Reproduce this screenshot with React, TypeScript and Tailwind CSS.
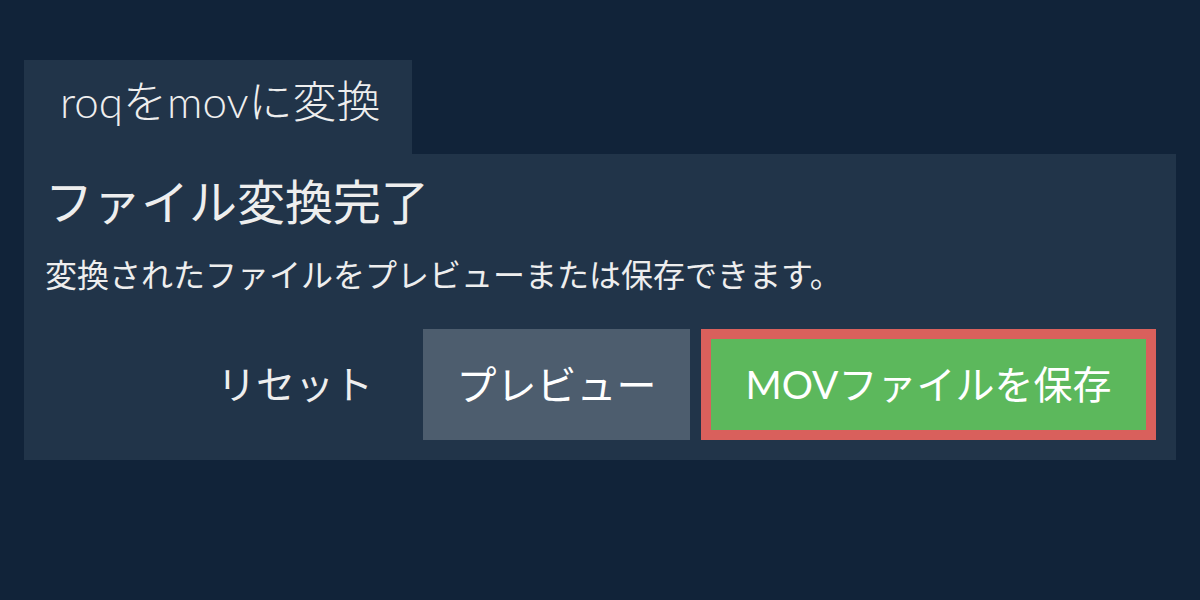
import React from 'react'

const font = { fontFamily: 'Lato, "Noto Sans CJK JP", sans-serif' }

const App: React.FC = () => {
    return (
        <div className="min-h-[600px] w-[1200px] bg-[#112339] pt-[60px] px-6 text-[#eeeeee]" style={font}>
            <div className="w-[388px] h-[94px] bg-[#213449] flex items-center pl-[36px] pb-3 text-[44px] font-light">
                roqをmovに変換
            </div>
            <div className="bg-[#213449] pl-[21px] pr-[20px] pt-[20px] pb-[20px]">
                <h1 className="text-[48px] leading-[55px]">ファイル変換完了</h1>
                <p className="mt-[27px] text-[32px] leading-[38px]">変換されたファイルをプレビューまたは保存できます。</p>
                <div className="mt-[35px] flex justify-end items-center">
                    <button className="h-[111px] px-[50px] text-[39px] text-[#eeeeee]">リセット</button>
                    <button className="h-[111px] w-[267px] bg-[#4d5d6e] text-[40px] text-white">プレビュー</button>
                    <button className="ml-[11px] h-[111px] w-[455px] border-[10px] border-[#d9605c] bg-[#5cb85c] text-[39px] text-white">
                        MOVファイルを保存
                    </button>
                </div>
            </div>
        </div>
    )
}

export default App
